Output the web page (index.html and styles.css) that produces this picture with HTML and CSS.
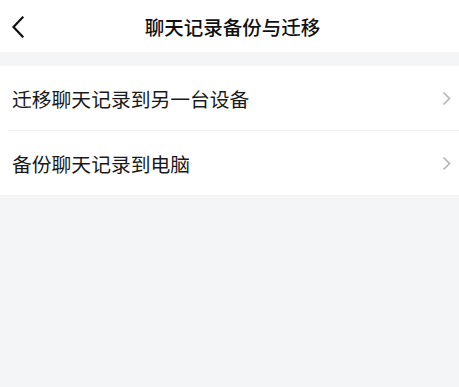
FILE: index.html
```html
<!DOCTYPE html>
<html lang="zh">
<head>
<meta charset="utf-8">
<link rel="stylesheet" href="styles.css">
</head>
<body>
<header class="nav">
  <span class="back">
    <svg width="14" height="22" viewBox="0 0 14 22"><path d="M11.5 1.5 L2.5 11 L11.5 20.5" fill="none" stroke="#111" stroke-width="2.2" stroke-linecap="square" stroke-linejoin="miter"/></svg>
  </span>
  <h1 class="title">聊天记录备份与迁移</h1>
</header>
<div class="gap"></div>
<section class="list">
  <div class="row">
    <span class="label">迁移聊天记录到另一台设备</span>
    <svg class="arrow" width="9" height="15" viewBox="0 0 9 15"><path d="M1.5 1.5 L7.5 7.5 L1.5 13.5" fill="none" stroke="#b5b5b5" stroke-width="1.6"/></svg>
  </div>
  <div class="divider"></div>
  <div class="row">
    <span class="label">备份聊天记录到电脑</span>
    <svg class="arrow" width="9" height="15" viewBox="0 0 9 15"><path d="M1.5 1.5 L7.5 7.5 L1.5 13.5" fill="none" stroke="#b5b5b5" stroke-width="1.6"/></svg>
  </div>
</section>
</body>
</html>
```
FILE: styles.css
```css
html, body {
  margin: 0;
  padding: 0;
  background: #f4f5f7;
  font-family: "Noto Sans CJK SC", "Noto Sans", sans-serif;
  height: 100%;
}
.nav {
  height: 52px;
  background: #fff;
  display: flex;
  align-items: center;
  justify-content: center;
  position: relative;
}
.back {
  position: absolute;
  left: 11px;
  top: 16px;
  display: flex;
}
.title {
  margin: 0;
  font-size: 19.5px;
  font-weight: 500;
  color: #111;
  letter-spacing: 0;
  transform: translateX(3px);
}
.gap {
  height: 14px;
}
.list {
  background: #fff;
}
.row {
  height: 64px;
  display: flex;
  align-items: center;
  justify-content: space-between;
  padding: 0 8px 0 12px;
}
.label {
  font-size: 19.8px;
  color: #1a1a1a;
  font-weight: 400;
}
.divider {
  height: 1px;
  background: #f0f0f0;
  margin-left: 8px;
}
```
